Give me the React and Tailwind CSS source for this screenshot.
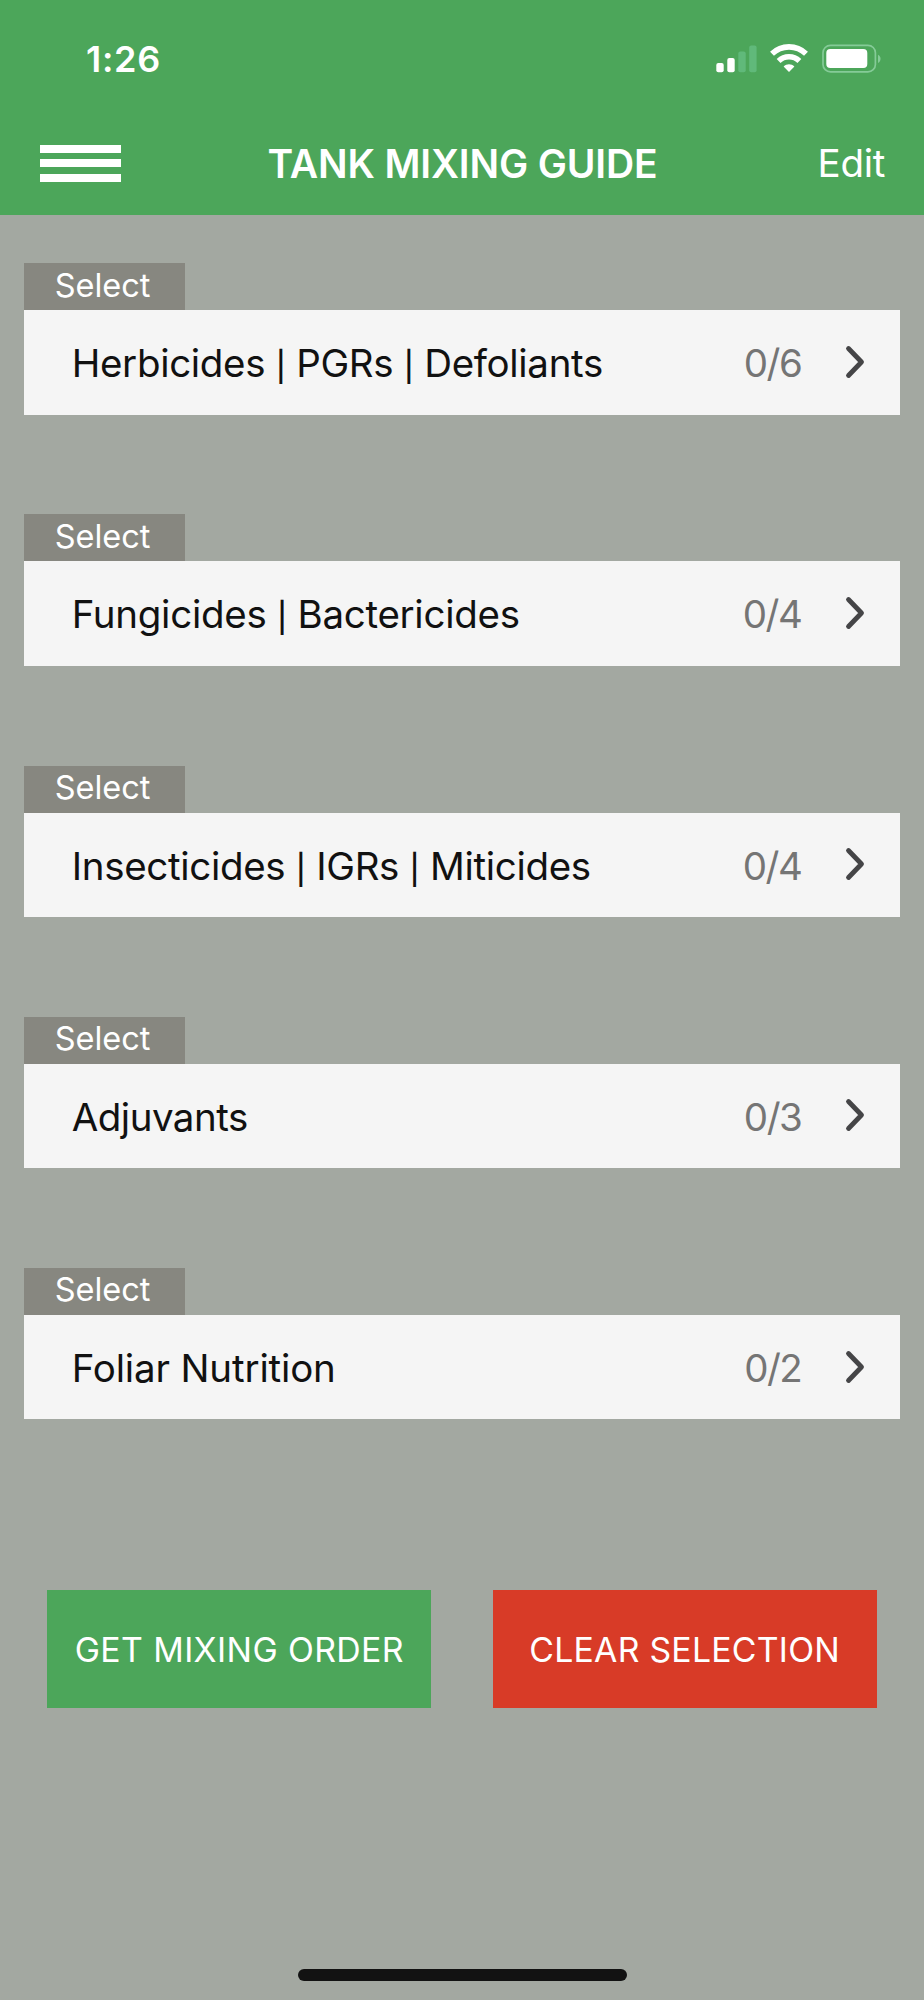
import React, { useState } from "react";

const initialCategories = [
  { id: 1, parts: ["Herbicides", "PGRs", "Defoliants"], max: 6, selected: 0, tracking: "tracking-[-0.32px]" },
  { id: 2, parts: ["Fungicides", "Bactericides"], max: 4, selected: 0, tracking: "tracking-[-0.28px]" },
  { id: 3, parts: ["Insecticides", "IGRs", "Miticides"], max: 4, selected: 0, tracking: "tracking-[-0.32px]" },
  { id: 4, parts: ["Adjuvants"], max: 3, selected: 0, tracking: "tracking-[-0.5px]" },
  { id: 5, parts: ["Foliar Nutrition"], max: 2, selected: 0, tracking: "tracking-[-0.15px]" },
];

const SignalIcon = () => (
  <svg width="42" height="28" viewBox="0 0 42 28" fill="white">
    <rect x="0.3" y="18" width="7.4" height="9.2" rx="2" />
    <rect x="11.3" y="13" width="7.4" height="14.2" rx="2" />
    <rect x="22.3" y="6.5" width="7.4" height="20.7" rx="2" fill="#60b97a" />
    <rect x="33.2" y="0.5" width="7.4" height="26.7" rx="2" fill="#60b97a" />
  </svg>
);

const WifiIcon = () => (
  <svg width="40" height="30" viewBox="0 1.2 40 30" fill="none" stroke="white" strokeWidth="5.6">
    <path d="M3 11C12.5 1.8 27.5 1.8 37 11" />
    <path d="M9.6 18.2C15.5 12.6 24.5 12.6 30.4 18.2" />
    <path d="M14.6 23.6C17.6 20.8 22.4 20.8 25.4 23.6L20 29.2Z" fill="white" stroke="none" />
  </svg>
);

const BatteryIcon = () => (
  <svg width="60" height="30" viewBox="0 0 60 30">
    <rect x="1" y="1.3" width="52.4" height="26.6" rx="7.5" fill="none" stroke="#85cb98" strokeWidth="1.7" />
    <rect x="4.3" y="5" width="41" height="19" rx="4" fill="white" />
    <path d="M56 10.8C59.4 12.2 59.4 17.6 56 19Z" fill="#85cb98" />
  </svg>
);

const CategoryRow = ({ category }) => (
  <div className="h-[151.4px]">
    <div className="flex h-[47px] w-[161px] items-center bg-[#878780] pb-[1.5px] pl-[31px] text-[32.5px] leading-none text-white">
      Select
    </div>
    <button className="flex h-[104.4px] w-full items-center bg-[#f5f5f5] pt-[2px] pr-[34px] pl-[48px] text-left text-[38.5px] leading-none">
      <span className={`flex-1 whitespace-nowrap text-[#111] ${category.tracking}`}>
        {category.parts.map((part, i) => (
          <React.Fragment key={part}>
            {i > 0 && (
              <>
                {" "}
                <span className="text-[29.5px] leading-none font-medium">|</span>{" "}
              </>
            )}
            {part}
          </React.Fragment>
        ))}
      </span>
      <span className="text-[#757575] tracking-[-1.5px]">
        {category.selected}/{category.max}
      </span>
      <svg className="mb-[3px] ml-[43px]" width="22" height="34" viewBox="0 0 22 34" fill="none">
        <path d="M4.5 3.5L17.5 17L4.5 30.5" stroke="#454547" strokeWidth="4.8" strokeLinecap="round" strokeLinejoin="round" />
      </svg>
    </button>
  </div>
);

const App = () => {
  const [categories, setCategories] = useState(initialCategories);

  const handleClear = () => {
    setCategories(categories.map((c) => ({ ...c, selected: 0 })));
  };

  return (
    <div className="flex h-[2000px] w-[924px] flex-col bg-[#a3a8a1] font-['Inter',sans-serif]">
      <header className="h-[215.4px] bg-[#4ca65a] text-white">
        {/* status bar */}
        <div className="flex h-[118px] items-center pr-[42px] pl-[86px]">
          <span className="flex-1 text-[36px] leading-none font-semibold tracking-[0.7px]">1:26</span>
          <SignalIcon />
          <span className="ml-[11px]">
            <WifiIcon />
          </span>
          <span className="ml-[13px]">
            <BatteryIcon />
          </span>
        </div>
        <div className="grid h-[90.6px] grid-cols-[226px_1fr_226px] items-center pr-[39px] pl-[40px] leading-none">
          <button className="flex w-[81px] flex-col gap-[6.3px]">
            <span className="h-[8px] bg-white" />
            <span className="h-[8px] bg-white" />
            <span className="h-[8px] bg-white" />
          </button>
          <h1 className="text-center text-[39px] leading-none font-semibold tracking-[-0.15px] whitespace-nowrap">
            TANK MIXING GUIDE
          </h1>
          <button className="text-right text-[38.5px] leading-none tracking-[-0.3px]">Edit</button>
        </div>
      </header>

      <main className="flex flex-1 flex-col px-[23.7px] pt-[47.8px]">
        <div className="flex flex-col gap-[99.8px]">
          {categories.map((category) => (
            <CategoryRow key={category.id} category={category} />
          ))}
        </div>

        <div className="mt-[171px] flex justify-between px-[23.7px] text-[33.8px] leading-none text-white">
          <button className="h-[118px] w-[384px] bg-[#4ca65a] pt-[2px] tracking-[0.4px] whitespace-nowrap">
            GET MIXING ORDER
          </button>
          <button
            onClick={handleClear}
            className="h-[118px] w-[384px] bg-[#d83b27] pt-[2px] tracking-[0.25px] whitespace-nowrap"
          >
            CLEAR SELECTION
          </button>
        </div>
      </main>

      {/* home indicator */}
      <div className="mx-auto mb-[19px] h-[12px] w-[329px] rounded-full bg-[#121212]" />
    </div>
  );
};

export default App;
